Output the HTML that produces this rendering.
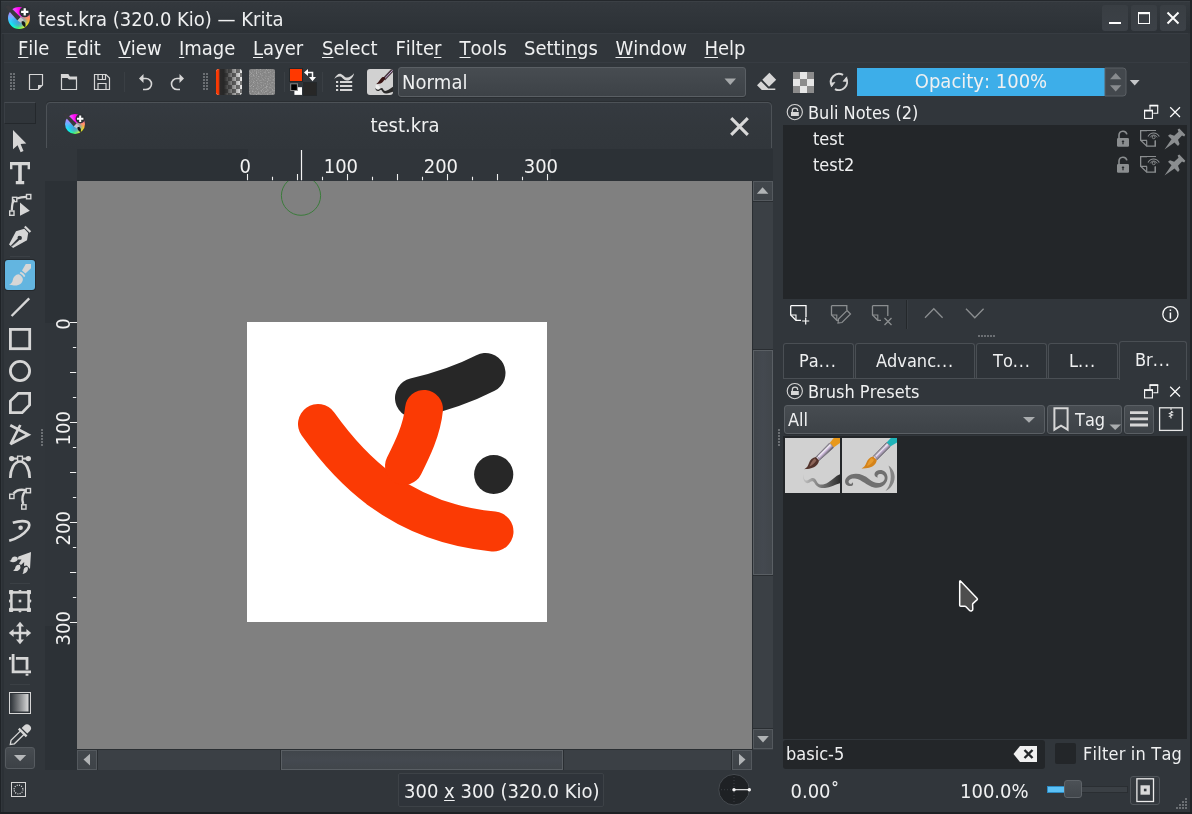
<!DOCTYPE html>
<html><head><meta charset="utf-8"><title>test.kra (320.0 Kio) — Krita</title>
<style>
*{box-sizing:border-box;margin:0;padding:0}
html,body{width:1192px;height:814px;overflow:hidden;background:#31363b}
body{position:relative;font-kerning:none;font-family:"DejaVu Sans","Liberation Sans",sans-serif;font-size:20px;font-stretch:condensed;color:#eff0f1;-webkit-font-smoothing:antialiased}
.a{position:absolute}
.t{position:absolute;white-space:nowrap;line-height:24px;height:24px}
u{text-decoration:underline;text-underline-offset:2px;text-decoration-thickness:1px}
svg{position:absolute;overflow:visible}
.btn{position:absolute;border:1px solid #5a5f64;border-radius:3px;background:linear-gradient(#474c51,#3d4247);box-shadow:0 1px 0 #2b2f33}
.wb{top:5px;width:26px;height:26px;border-radius:3px;background:linear-gradient(#393e43,#3c4147)}
.sbb{width:20px;height:20px;background:linear-gradient(#42474c,#3e4348);border:1px solid #54595e}
.dtab{top:343px;height:36px;border:1px solid #4a4f54;border-bottom:none;border-radius:3px 3px 0 0;background:#2e3338}
.d{font-size:18px}
.kic{border-radius:50%;background:radial-gradient(ellipse 42% 30% at 52% 68%,rgba(74,144,226,.95) 0%,rgba(74,150,230,.6) 60%,rgba(74,150,230,0) 100%),conic-gradient(from 0deg,#ff00f0 0deg,#ff30d0 50deg,#ff8a78 85deg,#ffa050 100deg,#ffee00 128deg,#e8ff20 150deg,#40ff70 185deg,#00ffee 222deg,#40c8ff 255deg,#8aa0ff 285deg,#d070ff 315deg,#ff30ff 340deg,#ff00f0 360deg)}
#root{position:absolute;left:0;top:0;width:1192px;height:814px;will-change:transform}
</style></head><body><div id="root">
<!-- window frame -->
<div class="a" id="win" style="left:0;top:0;width:1192px;height:814px;background:#31363b"></div>
<!-- TITLEBAR -->
<div class="a" id="titlebar" style="left:0;top:0;width:1192px;height:33px;background:linear-gradient(#34393e,#2c3136)"></div><div class="a" style="left:1px;top:1px;width:1189px;height:1px;background:#3b4045"></div>
<div class="a kic" style="left:7.5px;top:6.6px;width:22.8px;height:22.8px"></div><svg style="left:4.08px;top:3.18px" width="29.64" height="29.64" viewBox="-1.3 -1.3 2.6 2.6"><circle cx="0.52" cy="-0.52" r="0.47" fill="#2d3136"/><path d="M-1.18 -0.94 L-0.94 -1.12 L0.16 -0.06 L-0.12 0.24 Z" fill="#39393d"/><path d="M0.16 -0.06 L0.44 0.2 L0.22 0.46 L-0.12 0.24 Z" fill="#c4c4ca"/><path d="M0.26 0.3 C0.5 0.25 0.66 0.45 0.56 0.82 C0.36 0.74 0.2 0.52 0.26 0.3 Z" fill="#17171a"/><path d="M0.52 -0.84 V-0.2 M0.2 -0.52 H0.84" stroke="#fff" stroke-width="0.2" fill="none"/></svg>
<div class="t" style="left:38px;top:7px">test.kra (320.0 Kio) — Krita</div>
<div class="a wb" style="left:1102px"></div><div class="a wb" style="left:1131px"></div><div class="a wb" style="left:1160px"></div>
<svg style="left:1102px;top:5px" width="84" height="26" viewBox="0 0 84 26">
<path d="M7 18 H19" stroke="#fcfcfc" stroke-width="2" fill="none"/>
<rect x="36.5" y="7.5" width="11" height="11" stroke="#fcfcfc" stroke-width="1" fill="none"/><rect x="36" y="7" width="12" height="2.2" fill="#fcfcfc"/>
<path d="M65.500 7.500 L76.500 18.500 M76.500 7.500 L65.500 18.500" stroke="#fcfcfc" stroke-width="2" fill="none"/>
</svg>
<div class="a" style="left:2px;top:33px;width:1186px;height:1px;background:#373c42"></div>
<!-- MENUBAR -->
<div class="a" id="menubar" style="left:0;top:34px;width:1192px;height:28px"></div>
<div class="t" style="left:18px;top:36px"><u>F</u>ile</div>
<div class="t" style="left:66px;top:36px"><u>E</u>dit</div>
<div class="t" style="left:118.5px;top:36px"><u>V</u>iew</div>
<div class="t" style="left:179px;top:36px"><u>I</u>mage</div>
<div class="t" style="left:253px;top:36px"><u>L</u>ayer</div>
<div class="t" style="left:322px;top:36px"><u>S</u>elect</div>
<div class="t" style="left:395.5px;top:36px">Filte<u>r</u></div>
<div class="t" style="left:459.5px;top:36px"><u>T</u>ools</div>
<div class="t" style="left:524px;top:36px">Setti<u>n</u>gs</div>
<div class="t" style="left:615.5px;top:36px"><u>W</u>indow</div>
<div class="t" style="left:704.5px;top:36px"><u>H</u>elp</div>
<div class="a" style="left:2px;top:62px;width:1186px;height:1px;background:#373c42"></div>
<!-- TOOLBAR -->
<div class="a" id="toolbar" style="left:0;top:62px;width:1192px;height:40px"></div>
<svg id="tbicons" style="left:0;top:62px" width="1192" height="40" viewBox="0 62 1192 40">
<g fill="#6b6f73"><path id="grip" d="M10 73h2v2h-2zM13 73h2v2h-2zM10 76h2v2h-2zM13 76h2v2h-2zM10 79h2v2h-2zM13 79h2v2h-2zM10 82h2v2h-2zM13 82h2v2h-2zM10 85h2v2h-2zM13 85h2v2h-2zM10 88h2v2h-2zM13 88h2v2h-2z"/><use href="#grip" x="193"/></g>
<!-- new -->
<path d="M29.500 74.500 H42.500 V85 L38 89.500 H29.500 Z" fill="none" stroke="#d6d6d6" stroke-width="1.200"/><path d="M42.500 85 H38 V89.500 Z" fill="#d6d6d6"/>
<!-- open -->
<path d="M61.500 74.500 H68 L69.500 77 H76.500 V89.500 H61.500 Z" fill="none" stroke="#d6d6d6" stroke-width="1.200"/><path d="M61.500 74.500 H68 L69.500 77 H76.500 V79.500 H69 L67.500 78 H61.500 Z" fill="#d6d6d6"/>
<!-- save -->
<path d="M94.500 74.500 H106 L109.500 78 V89.500 H94.500 Z" fill="none" stroke="#d6d6d6" stroke-width="1.200"/><path d="M98 74.500 V79.500 H105.500 V74.500 M102.500 75 V79 M98 89.500 V83.500 H106 V89.500" fill="none" stroke="#d6d6d6" stroke-width="1.200"/>
<path d="M124.500 72 V92" stroke="#3a3f44" stroke-width="1"/>
<!-- undo -->
<path d="M141.500 78.500 H146 A5.500 5.500 0 0 1 146 89.500 H143" fill="none" stroke="#d6d6d6" stroke-width="1.600"/><path d="M139 78.500 L143.500 74 V83 Z" fill="#d6d6d6"/>
<!-- redo -->
<path d="M181.500 78.500 H177 A5.500 5.500 0 0 0 177 89.500 H180" fill="none" stroke="#d6d6d6" stroke-width="1.600"/><path d="M184 78.500 L179.500 74 V83 Z" fill="#d6d6d6"/>
<!-- gradient btn -->
<defs>
<pattern id="chk" x="216" y="69" width="8" height="8" patternUnits="userSpaceOnUse"><rect width="8" height="8" fill="#808080"/><rect width="4" height="4" fill="#fff"/><rect x="4" y="4" width="4" height="4" fill="#fff"/></pattern>
<linearGradient id="gfade" x1="0" x2="1" y1="0" y2="0"><stop offset="0" stop-color="#ff3800"/><stop offset="0.09" stop-color="#f63a06"/><stop offset="0.16" stop-color="#2c2a2a"/><stop offset="0.3" stop-color="#272727"/><stop offset="1" stop-color="#272727" stop-opacity="0.08"/></linearGradient>
<clipPath id="gclip"><rect x="216" y="69" width="26" height="26" rx="3"/></clipPath>
<filter id="noise" x="0" y="0" width="100%" height="100%"><feTurbulence type="fractalNoise" baseFrequency="0.8" numOctaves="2" seed="4" result="n"/><feColorMatrix in="n" type="matrix" values="0 0 0 0 1  0 0 0 0 1  0 0 0 0 1  0.9 0 0 0 -0.43" result="a"/><feComposite in="a" in2="SourceGraphic" operator="in"/></filter>
</defs>
<g clip-path="url(#gclip)"><rect x="216" y="69" width="26" height="26" fill="url(#chk)"/><rect x="216" y="69" width="26" height="26" fill="url(#gfade)"/></g>
<rect x="249" y="69" width="26" height="26" rx="2" fill="#858585"/><rect x="249" y="69" width="26" height="26" rx="2" fill="#fff" filter="url(#noise)"/>
<path d="M284.500 72 V92 M322.500 72 V92" stroke="#3a3f44" stroke-width="1"/>
<!-- fg/bg -->
<rect x="289.500" y="68.500" width="13" height="13" fill="#ff3800" stroke="#24282b" stroke-width="1"/>
<rect x="303.500" y="82.500" width="13" height="13" fill="#272727" stroke="#24282b" stroke-width="1"/>
<rect x="294.400" y="87.200" width="7.600" height="7.700" fill="#fff"/>
<rect x="290.700" y="83.800" width="6.700" height="6.700" fill="#000" stroke="#8c8c8c" stroke-width="1"/>
<path d="M306 72.500 H312.500 V79" fill="none" stroke="#fcfcfc" stroke-width="1.500"/><path d="M304 72.500 L308 69 V76 Z M312.500 81.200 L309 77 H316 Z" fill="#fcfcfc"/>
<!-- brush settings icon -->
<path d="M334.300 78.800 C336 75.500 338.500 73.200 341 74 C343.500 74.800 344.500 77.600 347 77.600 C349.500 77.600 352 75.500 354 73.200 C353.500 77 350.500 80.500 347 80.500 C343.500 80.500 342.500 77 340.200 76.500 C338 76.100 336 77.200 334.300 78.800 Z" fill="#d6d6d6"/>
<path d="M336 82 H338.200 M340 82 H352.200 M336 86 H338.200 M340 86 H352.200 M336 90 H338.200 M340 90 H352.200" stroke="#d6d6d6" stroke-width="2.100" fill="none"/>
<!-- brush preset btn -->
<clipPath id="pbc"><rect x="367" y="69" width="26" height="26" rx="3"/></clipPath>
<g clip-path="url(#pbc)"><rect x="367" y="69" width="26" height="26" fill="#d1d1d1"/>
<path d="M375.500 85.500 C377 84.500 379 85.500 380 87 L379 90 L375.800 89 Z" fill="#efefef"/>
<path d="M375.300 87.800 C376.500 90 378.500 90.200 380 88.800 C381.500 87.400 382.800 87.800 383.300 89.600 C384 91.600 386.500 91 388.500 89.800 C390.500 88.600 391.800 87 394 86.200 L394 91.600 C391 92 389 93.600 386 93.400 C383.500 93.200 382.500 91.800 381.800 90.400 C381.200 89.400 380.600 89.600 379.600 90.400 C377.800 91.800 375.500 90.800 375.300 87.800 Z" fill="#2b2b2b"/>
<path d="M393.4 69.1 L383.8 79.3" stroke="#4a3a42" stroke-width="3.3"/><path d="M392.8 70.1 L384.4 79" stroke="#bfa4d0" stroke-width="1"/>
<path d="M385.600 78 L383 81.800 C381.500 83.600 379 84.200 376.300 84 C378.500 82.500 379.500 80.500 381.200 78.300 C382.300 76.900 384 76.400 385.600 78 Z" fill="#3a1414"/>
</g>
</svg>
<!-- blend combobox -->
<div class="btn" style="left:398px;top:67px;width:348px;height:30px"></div>
<div class="t" style="left:402px;top:70px">Normal</div>
<svg style="left:724px;top:78px" width="13" height="8" viewBox="0 0 13 8"><path d="M0.500 0.500 H12 L6.250 7 Z" fill="#a5a8aa"/></svg>
<svg id="tbicons2" style="left:750px;top:62px" width="442" height="40" viewBox="750 62 442 40">
<!-- eraser -->
<path d="M769.400 72.800 L776.200 79.800 L769 86.800 L762.300 79.800 Z" fill="#d6d6d6"/><path d="M761 81.300 L757 85.200 L761.800 90 H775.300 V88.400 H768.200 Z" fill="#d6d6d6"/>
<!-- checker -->
<g><rect x="793" y="72" width="21" height="21" fill="#e6e6e6"/><rect x="793" y="72" width="7" height="7" fill="#8c8c8c"/><rect x="807" y="72" width="7" height="7" fill="#8c8c8c"/><rect x="800" y="79" width="7" height="7" fill="#8c8c8c"/><rect x="793" y="86" width="7" height="7" fill="#8c8c8c"/><rect x="807" y="86" width="7" height="7" fill="#8c8c8c"/></g>
<!-- reload -->
<path d="M843.050 74.990 A8.100 8.100 0 0 0 831.990 86.050 M834.950 89.010 A8.100 8.100 0 0 0 845.940 77.830" fill="none" stroke="#d6d6d6" stroke-width="2"/>
<path d="M831.300 87 L835 82.200 L831.600 83 Z M846.800 76.800 L843 81.300 L846.600 81.600 Z" fill="#d6d6d6" stroke="#d6d6d6" stroke-width="0.600" stroke-linejoin="round"/>
<!-- opacity -->
<rect x="857" y="68" width="248" height="28" fill="#3daee9"/>
<path d="M1105 68 H1123 Q1126 68 1126 71 V93 Q1126 96 1123 96 H1105 Z" fill="#43484d" stroke="#5a5f64" stroke-width="1"/>
<path d="M1110 79.200 H1121.400 L1115.700 73 Z M1110 85.200 H1121.400 L1115.700 91.400 Z" fill="#888b8e"/>
<path d="M1129.800 80 H1139.600 L1134.700 85.400 Z" fill="#c4c6c8"/>
</svg>
<div class="t" style="left:857px;top:69px;width:248px;text-align:center">Opacity: 100%</div>
<!-- TOOLBOX -->
<div class="a" style="left:4px;top:102px;width:32px;height:22px;border:1px solid #24282c;border-top-color:#464b51;border-left-color:#3a3f45;background:#30353a"></div>
<div class="a" style="left:5px;top:260px;width:30px;height:30px;border-radius:3px;background:#63b5e0;box-shadow:0 0 0 1px #24282c"></div>
<div class="a" style="left:5px;top:747px;width:30px;height:22px;border-radius:3px;border:1px solid #565b60;background:linear-gradient(#474c51,#3c4146)"></div>
<svg id="toolicons" style="left:0;top:100px" width="45" height="714" viewBox="0 100 45 714" fill="none" stroke="none">
<g stroke="#3b4045" stroke-width="1"><path d="M10 256.500H30M10 583.500H30M10 684.500H30"/></g>
<!-- pointer -->
<path d="M13 130 V149.300 L17.600 145.300 L20.600 152.300 L23.500 151 L20.600 144 L26.300 143.500 Z" fill="#d6d6d6"/>
<!-- text -->
<path d="M10 162 H30 V169.300 H27.600 V165.200 H21.800 V181 H24.200 V184.300 H15.800 V181 H18.200 V165.200 H12.400 V169.300 H10 Z" fill="#d6d6d6"/>
<!-- edit shapes -->
<path d="M11.800 210.500 C12 204 12.500 201 14.500 199.500 M17 198.500 C20 197.200 23 196.800 26 196.800" stroke="#d6d6d6" stroke-width="2.200"/>
<g stroke="#d6d6d6" stroke-width="1.400"><rect x="26.500" y="194.500" width="4.300" height="4.300"/><rect x="12.500" y="197.300" width="4.300" height="4.300"/><rect x="9.700" y="211" width="4.300" height="4.300"/></g>
<path d="M20 202.500 V215.700 L29.800 210.800 Z" fill="#d6d6d6"/>
<!-- calligraphy -->
<path d="M16 231.200 L24.300 228.800 L28.200 233 L27 240.200 L13 248 L11.800 246.800 L18.200 238.500 A1.900 1.900 0 1 1 19.600 239.800 L11.800 246.800 L9 244.400 Z" fill="#d6d6d6" fill-rule="evenodd"/>
<path d="M24.800 226.500 L30.400 232" stroke="#d6d6d6" stroke-width="2.200"/>
<circle cx="19.300" cy="237.500" r="1.700" fill="#31363b"/><path d="M18.300 238.600 L11.400 246" stroke="#31363b" stroke-width="1.100"/>
<!-- brush (selected) -->
<path d="M25.800 264 H31 V268.200 L25.400 273.600 L22 270.600 Z" fill="#d6d6d6"/>
<path d="M20.700 271.800 C22.700 272.500 24.300 274 25.300 276 L24 277.200 C23 275.400 21.500 274 19.600 273.200 Z" fill="#d6d6d6"/>
<path d="M18.600 274.300 C21 275.200 22.500 277 22.900 279 C23 283 19 286 14 285.500 C12 285.400 10.500 285 9 284.600 C11 284 12.300 282.600 12.800 280 C13.300 277.200 15.500 274.600 18.600 274.300 Z" fill="#d6d6d6"/>
<!-- line -->
<path d="M11.600 316 L29.200 298.400" stroke="#d6d6d6" stroke-width="2.400"/>
<!-- rect -->
<rect x="10.400" y="329.400" width="19.300" height="19.300" stroke="#d6d6d6" stroke-width="2.800"/>
<!-- ellipse -->
<circle cx="20" cy="371" r="9.600" stroke="#d6d6d6" stroke-width="2.800"/>
<!-- polygon -->
<path d="M18.200 393.400 H29.600 V405 L22.200 412.700 H10.400 V401.100 Z" stroke="#d6d6d6" stroke-width="2.800"/>
<!-- polyline -->
<path d="M10.300 425.300 L28.400 434.700 L10.600 444 L20.300 425" stroke="#d6d6d6" stroke-width="2.700" stroke-linejoin="miter" stroke-miterlimit="3"/>
<!-- bezier -->
<path d="M10.300 478 C10.300 470 14 461.500 20 461.500 C26 461.500 29.700 470 29.700 478" stroke="#d6d6d6" stroke-width="2.700"/>
<path d="M11.600 458.600 H28.400" stroke="#d6d6d6" stroke-width="2"/><circle cx="11.700" cy="458.600" r="2.700" fill="#d6d6d6"/><circle cx="28.300" cy="458.600" r="2.700" fill="#d6d6d6"/>
<rect x="17.600" y="456.200" width="4.800" height="4.800" fill="#31363b" stroke="#d6d6d6" stroke-width="1.400"/>
<!-- freehand path -->
<path d="M13.500 493.500 C16 490.500 21 489 26 490.200 C22.500 494 21.500 499 23.200 504" stroke="#d6d6d6" stroke-width="2.400"/>
<g stroke="#d6d6d6" stroke-width="1.400" fill="#31363b"><rect x="9.700" y="494.200" width="4.300" height="4.300"/><rect x="26.200" y="488.500" width="4.300" height="4.300"/><rect x="21.700" y="504.800" width="4.300" height="4.300"/></g>
<!-- dyna -->
<path d="M12.800 522.800 C18 521.200 24 520.600 27.500 522 C30 523.200 29.800 526.500 27.500 529.500 C24 534 17 538.500 9.200 540.800" stroke="#d6d6d6" stroke-width="2.700"/><circle cx="20.600" cy="527.700" r="2.300" fill="#d6d6d6"/>
<!-- multibrush -->
<path d="M31 552 L30 569 L26.800 565.500 L24 566 L24.200 562 L21 565 L19 563.500 L21.500 559.500 L17.500 559.500 L18.500 556.500 Z" fill="#d6d6d6"/>
<path d="M17.500 557.500 C15 555.500 12 556.500 11.500 559 C11 560.500 10 560.800 9.200 560.800 C11.500 563 16.500 562.500 17.800 559.500 Z" fill="#d6d6d6"/>
<path d="M20 565 C17.500 564 15.500 565.500 15.200 568 C15 569.500 14 570 13 570.200 C15.500 572 19.500 571 20.500 568 Z" fill="#d6d6d6"/>
<path d="M27.500 567 C25 566.500 23.500 568.500 23.500 570.500 C23.500 572 23 573 22.500 574 C26 573.500 28 571 27.900 568.500 Z" fill="#d6d6d6"/>
<!-- transform -->
<rect x="11.400" y="592.400" width="17.200" height="17.200" stroke="#d6d6d6" stroke-width="2.500"/>
<g fill="#d6d6d6"><rect x="9" y="590" width="4.200" height="4.200" rx="0.800"/><rect x="26.800" y="590" width="4.200" height="4.200" rx="0.800"/><rect x="9" y="607.800" width="4.200" height="4.200" rx="0.800"/><rect x="26.800" y="607.800" width="4.200" height="4.200" rx="0.800"/><rect x="18.600" y="590" width="2.800" height="1.600" rx="0.600"/><rect x="18.600" y="610.600" width="2.800" height="1.600" rx="0.600"/><rect x="9" y="599.600" width="1.600" height="2.800" rx="0.600"/><rect x="29.600" y="599.600" width="1.600" height="2.800" rx="0.600"/><rect x="18.700" y="599.700" width="2.600" height="2.600"/></g>
<!-- move -->
<path d="M20 624 V642 M11 633 H29" stroke="#d6d6d6" stroke-width="2.400"/>
<path d="M20 621.800 L24 626.600 H16 Z M20 644.200 L24 639.400 H16 Z M8.800 633 L13.600 629 V637 Z M31.200 633 L26.400 629 V637 Z" fill="#d6d6d6"/>
<!-- crop -->
<path d="M13.100 654 V671.800 H31 M9 658.300 H11.200 M15.900 658.300 H27 V669.800 M27 673.800 V675.800" stroke="#d6d6d6" stroke-width="2.800"/>
<!-- gradient -->
<defs><linearGradient id="tg" x1="0" x2="1"><stop offset="0" stop-color="#33383d"/><stop offset="1" stop-color="#d8d8d8"/></linearGradient></defs>
<rect x="9.500" y="692.500" width="21" height="21" stroke="#d6d6d6" stroke-width="1"/><rect x="11" y="694" width="17.500" height="17.500" fill="url(#tg)"/>
<!-- picker -->
<path d="M24.200 725.600 A3.700 3.700 0 0 1 29.900 730.900 L27.300 733.500 L21.700 728 Z" fill="#d6d6d6"/>
<path d="M18.800 728.600 L26.600 736.400" stroke="#d6d6d6" stroke-width="2.400"/>
<path d="M20.800 730.600 L11 740.400 L10.300 744.500 L14.400 743.800 L24.400 734" stroke="#d6d6d6" stroke-width="1.300"/>
<path d="M14 755 H26.200 L20.100 761.300 Z" fill="#b6b8ba"/>
<!-- status selection icon -->
<rect x="11.500" y="782.500" width="14" height="14" stroke="#d6d6d6" stroke-width="1"/><circle cx="18.500" cy="789.500" r="4.400" stroke="#e6e6e6" stroke-width="1.200" stroke-dasharray="1 1.300"/>
</svg>
<!-- DOCUMENT -->
<div class="a" id="tab" style="left:46px;top:102px;width:726px;height:50px;box-shadow:0 -1px 0 #2a2e32;border:1px solid #4d5257;border-radius:4px 4px 0 0;background:linear-gradient(#353a40,#32373c 60%,#31363b)"></div>
<div class="a" style="left:45px;top:148px;width:729px;height:34px;background:#31363b"></div>
<div class="a kic" style="left:65px;top:113.9px;width:20px;height:20px"></div><svg style="left:62px;top:110.9px" width="26" height="26" viewBox="-1.3 -1.3 2.6 2.6"><circle cx="0.52" cy="-0.52" r="0.47" fill="#2d3136"/><path d="M-1.18 -0.94 L-0.94 -1.12 L0.16 -0.06 L-0.12 0.24 Z" fill="#39393d"/><path d="M0.16 -0.06 L0.44 0.2 L0.22 0.46 L-0.12 0.24 Z" fill="#c4c4ca"/><path d="M0.26 0.3 C0.5 0.25 0.66 0.45 0.56 0.82 C0.36 0.74 0.2 0.52 0.26 0.3 Z" fill="#17171a"/><path d="M0.52 -0.84 V-0.2 M0.2 -0.52 H0.84" stroke="#fff" stroke-width="0.2" fill="none"/></svg>
<div class="t" style="left:46px;top:113px;width:718px;text-align:center">test.kra</div>
<svg style="left:730px;top:117px" width="19" height="19" viewBox="0 0 19 19"><path d="M1.200 1.200 L17.800 17.800 M17.800 1.200 L1.200 17.800" stroke="#d8d8d8" stroke-width="3.100" fill="none"/></svg>
<!-- rulers -->
<div class="a" id="hruler" style="left:77px;top:149px;width:696px;height:32px;background:#2c3136"></div>
<div class="a" id="vruler" style="left:45px;top:181px;width:32px;height:589px;background:#2c3136"></div>
<div class="a" style="left:248px;top:149px;width:303px;height:32px;background:#30353a"></div>
<div class="a" style="left:45px;top:323px;width:32px;height:303px;background:#30353a"></div>
<svg id="rul" style="left:45px;top:149px;font-family:'DejaVu Sans','Liberation Sans',sans-serif;font-size:20px;font-stretch:condensed" width="728" height="621" viewBox="45 149 728 621" fill="#f2f2f2">
<path d="M247.5 174.1 V180.300M272.5 176.8 V180.300M297.5 174.1 V180.300M322.5 176.8 V180.300M347.5 174.1 V180.300M372.5 176.8 V180.300M397.5 174.1 V180.300M422.5 176.8 V180.300M447.5 174.1 V180.300M472.5 176.8 V180.300M497.5 174.1 V180.300M522.5 176.8 V180.300M547.5 174.1 V180.300" stroke="#f0f0f0" stroke-width="1.100" fill="none"/>
<path d="M70 322.5 H77M72.9 347.5 H76.200M70 372.5 H76.200M72.9 397.5 H76.200M70 422.5 H77M72.9 447.5 H76.200M70 472.5 H76.200M72.9 497.5 H76.200M70 522.5 H77M72.9 547.5 H76.200M70 572.5 H76.200M72.9 597.5 H76.200M70 622.5 H77" stroke="#f0f0f0" stroke-width="1.100" fill="none"/>
<path d="M301.500 150 V180.300" stroke="#f4f4f4" stroke-width="1.200" fill="none"/>
<text x="239.600" y="172.600">0</text><text x="323.700" y="172.600">100</text><text x="423.700" y="172.600">200</text><text x="523.700" y="172.600">300</text>
<text transform="translate(70.200 329.800) rotate(-90)">0</text><text transform="translate(70.200 445.400) rotate(-90)">100</text><text transform="translate(70.200 545.400) rotate(-90)">200</text><text transform="translate(70.200 645.400) rotate(-90)">300</text>
</svg>
<!-- canvas -->
<div class="a" id="canvas" style="left:77px;top:181px;width:675px;height:568px;background:#808080"></div>
<div class="a" id="image" style="left:247px;top:322px;width:300px;height:300px;background:#fff"></div>
<svg id="paint" style="left:247px;top:322px" width="300" height="300" viewBox="247 322 300 300">
<path d="M415 398 C440 392 466 383 485.500 373" fill="none" stroke="#272727" stroke-width="40" stroke-linecap="round"/>
<circle cx="493.700" cy="474.500" r="19.600" fill="#272727"/>
<path d="M318 424 C348 466 398 522.500 493.500 531.500" fill="none" stroke="#fb3a04" stroke-width="40" stroke-linecap="round"/>
<path d="M424 409 C422 430 412 450 404 466" fill="none" stroke="#fb3a04" stroke-width="38" stroke-linecap="round"/>
</svg>
<svg style="left:280px;top:181px;overflow:hidden" width="42" height="40" viewBox="280 181 42 40"><circle cx="301" cy="195.700" r="19.600" fill="none" stroke="#3b7c3b" stroke-width="1"/></svg>
<!-- scrollbars -->
<div class="a" style="left:752px;top:181px;width:21px;height:569px;background:#3b4045;border-left:1px solid #2a2e32"></div>
<div class="a" style="left:77px;top:749px;width:675px;height:21px;background:#3b4045;border-top:1px solid #2a2e32"></div>
<div class="a sbb" style="left:753px;top:181px"></div>
<div class="a sbb" style="left:753px;top:729px"></div>
<div class="a sbb" style="left:77px;top:750px"></div>
<div class="a sbb" style="left:732px;top:750px"></div>
<div class="a" style="left:753px;top:349px;width:20px;height:227px;background:#2a2e32"></div>
<div class="a" style="left:280px;top:750px;width:284px;height:20px;background:#2a2e32"></div>
<div class="a" style="left:97px;top:750px;width:1px;height:20px;background:#2a2e32"></div><div class="a" style="left:731px;top:750px;width:1px;height:20px;background:#2a2e32"></div>
<div class="a" style="left:753px;top:201px;width:20px;height:1px;background:#2a2e32"></div><div class="a" style="left:753px;top:728px;width:20px;height:1px;background:#2a2e32"></div>
<div class="a" style="left:753px;top:350px;width:20px;height:225px;background:linear-gradient(90deg,#41464b,#444950 50%,#41464b);border:1px solid #5a5f64"></div>
<div class="a" style="left:281px;top:750px;width:282px;height:20px;background:linear-gradient(#41464b,#444950 50%,#41464b);border:1px solid #5a5f64"></div>
<svg style="left:77px;top:181px" width="696" height="589" viewBox="77 181 696 589"><g fill="#b0b3b5"><path d="M756.800 193.800 H768.400 L762.600 187.300 Z"/><path d="M757.200 736 H768.800 L763 742.500 Z"/><path d="M90 753.800 V765.400 L83.500 759.600 Z"/><path d="M739 753.800 V765.400 L745.500 759.600 Z"/></g></svg>
<!-- DOCKS -->
<div class="a" style="left:783px;top:125px;width:404px;height:174px;background:#232629"></div>
<div class="t d" style="left:808px;top:101px">Buli Notes (2)</div>
<div class="t d" style="left:813px;top:127px">test</div>
<div class="t d" style="left:813px;top:153px">test2</div>
<svg id="dock1" style="left:783px;top:100px" width="405" height="240" viewBox="783 100 405 240" fill="none">
<g id="lockc"><circle cx="794.800" cy="112.100" r="7.600" stroke="#d6d6d6" stroke-width="1.100"/><rect x="791" y="112" width="7.800" height="4" fill="#d6d6d6"/><path d="M792.3 112 V110.9 A2.7 2.7 0 0 1 797.7 110.9" stroke="#d6d6d6" stroke-width="1.2"/></g>
<g id="floatx" stroke="#fcfcfc"><path d="M1150 109.800 V105.700 H1157.700 V113.300 H1153.300" stroke-width="1.100"/><path d="M1149.500 105.500 H1158.200" stroke-width="1.600"/><rect x="1144.600" y="110.700" width="7.800" height="7.700" stroke-width="1.100"/><path d="M1144 110.500 H1153" stroke-width="1.600"/><path d="M1170.200 107.300 L1180 117 M1180 107.300 L1170.200 117" stroke-width="1.200"/></g>
<g id="rowic"><g fill="#8b8e90"><rect x="1117" y="138" width="12" height="8.800" rx="1.200"/><path d="M1156 130 V146.700 H1146.500 L1140 140.500 V130 Z M1154.700 131.300 H1141.300 V140 L1147 145.400 H1154.700 Z" fill-rule="evenodd"/><path d="M1140.500 140.300 H1146.700 V146.200" fill="none" stroke="#8b8e90" stroke-width="1.200"/><path d="M1164.500 149.600 L1171.500 139.300 L1168 135.800 L1170 134.300 L1174.200 135.800 L1178.500 131.800 L1177.600 129.500 L1179.300 128.600 L1185.300 134.800 L1184.200 136.400 L1182 135.400 L1178 139.800 L1179.600 144 L1178 146 L1174.500 142.400 Z"/></g>
<path d="M1119 138 V135 A4 4 0 0 1 1126.900 134.400" stroke="#8b8e90" stroke-width="1.600"/><path d="M1123 140 L1124.500 142 H1123.600 V144.300 H1122.400 V142 H1121.500 Z" fill="#232629"/>
<rect x="1147" y="131" width="12" height="9.500" fill="#232629"/><path d="M1148 136.500 C1150.500 131.800 1156.500 131.800 1159.300 136.500" stroke="#8b8e90" stroke-width="1.100"/><path d="M1150.200 137.300 C1152 134.300 1155.400 134.300 1157.200 137.300" stroke="#8b8e90" stroke-width="1"/><circle cx="1153.700" cy="137.200" r="1.500" stroke="#8b8e90" stroke-width="0.900"/><path d="M1155.300 140.500 V146 " stroke="#8b8e90" stroke-width="1.300"/></g>
<use href="#rowic" y="26"/>
<!-- bottom toolbar -->
<g stroke="#fcfcfc" stroke-width="1.300"><path d="M790.700 305.700 H806 V317 M801 320.300 H796 L790.700 315 V305.700"/><path d="M790.700 315 H796 V320.300" stroke-width="1.100"/><path d="M805.700 317.500 V324.500 M802.200 321 H809.200" stroke-width="1.200"/></g>
<g stroke="#8b8e90" stroke-width="1.300"><path d="M831.500 305.700 H846.800 V310 M839 320.300 H836.800 L831.500 315 V305.700"/><path d="M831.500 315 H836.800 V320.300" stroke-width="1.100"/><path d="M847 310.500 L850.500 314 L842 322.500 L838 323 L838.500 319 Z" stroke-width="1.200"/>
<path d="M872.500 305.700 H887.800 V316 M881 320.300 H877.800 L872.500 315 V305.700"/><path d="M872.500 315 H877.800 V320.300" stroke-width="1.100"/><path d="M884.500 318 L891.500 325 M891.500 318 L884.500 325" stroke-width="1.300"/>
<path d="M925 317.800 L933.800 308.800 L942.600 317.800 M966 308.800 L974.800 317.800 L983.600 308.800" stroke-width="1.300"/></g>
<path d="M906.500 300 V329" stroke="#24282b" stroke-width="1"/><path d="M907.500 300 V329" stroke="#393e43" stroke-width="1"/>
<circle cx="1170.400" cy="314.200" r="7.600" stroke="#fcfcfc" stroke-width="1.300"/><path d="M1170.400 312.500 V318.800 M1170.400 309.500 V311" stroke="#fcfcfc" stroke-width="1.500"/>
<path d="M978 335h2v2h-2zM981 335h2v2h-2zM984 335h2v2h-2zM987 335h2v2h-2zM990 335h2v2h-2zM993 335h2v2h-2z" fill="#6b6f73"/>
</svg>
<!-- tabs -->
<div class="a dtab" style="left:783px;width:71px"></div>
<div class="a dtab" style="left:855px;width:120px"></div>
<div class="a dtab" style="left:976px;width:71px"></div>
<div class="a dtab" style="left:1048px;width:70px"></div>
<div class="a dtab" style="left:1119px;width:68px;top:341px;height:39px;background:#31363b;border-bottom:none"></div>
<div class="a" style="left:783px;top:378px;width:337px;height:1px;background:#4a4f54"></div>
<div class="t d" style="left:799px;top:349px">Pa<span style="letter-spacing:0.85px">...</span></div>
<div class="t d" style="left:876px;top:349px">Advanc<span style="letter-spacing:0.85px">...</span></div>
<div class="t d" style="left:993px;top:349px">To<span style="letter-spacing:0.85px">...</span></div>
<div class="t d" style="left:1069px;top:349px">L<span style="letter-spacing:0.85px">...</span></div>
<div class="t d" style="left:1135px;top:348px">Br<span style="letter-spacing:0.85px">...</span></div>
<!-- brush presets -->
<div class="t d" style="left:808px;top:380px">Brush Presets</div>
<svg style="left:783px;top:380px" width="405" height="24" viewBox="783 380 405 24" fill="none"><use href="#lockc" y="279"/><use href="#floatx" y="279.500"/></svg>
<div class="btn" style="left:784px;top:405px;width:261px;height:29px"></div>
<div class="t d" style="left:788px;top:408px">All</div>
<div class="btn" style="left:1047px;top:405px;width:75px;height:29px"></div>
<div class="t d" style="left:1075px;top:408px">Tag</div>
<div class="btn" style="left:1124px;top:405px;width:30px;height:29px"></div>
<svg style="left:1020px;top:405px" width="168" height="30" viewBox="1020 405 168 30" fill="none">
<path d="M1023 417 H1035 L1029 422.800 Z" fill="#a9acae"/>
<path d="M1054.400 408.200 H1067.600 V429.600 L1061 425.600 L1054.400 429.600 Z" stroke="#d6d6d6" stroke-width="2"/>
<path d="M1109.500 424.500 H1121 L1115.200 430 Z" fill="#a9acae"/>
<path d="M1130 412.700 H1148 M1130 418.800 H1148 M1130 425 H1148" stroke="#d6d6d6" stroke-width="2.800"/>
<rect x="1159.600" y="407.800" width="22.800" height="22.600" stroke="#e6e6e6" stroke-width="1.300"/><path d="M1171 408 V410 M1171 411.300 l1.500 0.800 l-3 1.400 l3 1.400 l-3 1.400 l1.500 0.800 V418.600" stroke="#e6e6e6" stroke-width="1.100"/>
</svg>
<div class="a" style="left:783px;top:436px;width:404px;height:303px;background:#232629"></div>
<svg style="left:778px;top:429px" width="2" height="17" viewBox="0 0 2 17"><path d="M0 0h2v2h-2zM0 3h2v2h-2zM0 6h2v2h-2zM0 9h2v2h-2zM0 12h2v2h-2zM0 15h2v2h-2z" fill="#6b6f73"/></svg>
<svg style="left:41px;top:429px" width="2" height="17" viewBox="0 0 2 17"><path d="M0 0h2v2h-2zM0 3h2v2h-2zM0 6h2v2h-2zM0 9h2v2h-2zM0 12h2v2h-2zM0 15h2v2h-2z" fill="#6b6f73"/></svg>
<svg id="thumbs" style="left:785px;top:438px" width="112" height="55" viewBox="0 0 112 55" fill="none">
<defs>
<linearGradient id="fer" gradientUnits="userSpaceOnUse" x1="37.4" y1="11.9" x2="41.6" y2="16.1"><stop offset="0" stop-color="#5e5a64"/><stop offset="0.3" stop-color="#f2eef6"/><stop offset="0.55" stop-color="#cdb8dc"/><stop offset="0.82" stop-color="#8a8492"/><stop offset="1" stop-color="#55515b"/></linearGradient><linearGradient id="fer2" gradientUnits="userSpaceOnUse" x1="94.6" y1="11.3" x2="98.8" y2="15.5"><stop offset="0" stop-color="#5e5a64"/><stop offset="0.3" stop-color="#f2eef6"/><stop offset="0.55" stop-color="#cdb8dc"/><stop offset="0.82" stop-color="#8a8492"/><stop offset="1" stop-color="#55515b"/></linearGradient>
<linearGradient id="st1" x1="0" x2="1" y1="0" y2="0"><stop offset="0" stop-color="#c4c4c4"/><stop offset="0.4" stop-color="#828282"/><stop offset="1" stop-color="#2a2a2a"/></linearGradient>
<clipPath id="c1"><rect width="55" height="55"/></clipPath><clipPath id="c2"><rect x="57" width="55" height="55"/></clipPath>
</defs>
<rect width="55" height="55" fill="#d1d1d1"/><rect x="57" width="55" height="55" fill="#d1d1d1"/>
<g id="th1" clip-path="url(#c1)">
<path d="M18 36 C18.500 42 21 44 24 41.500 C27 39 30 39.500 31.500 43 C33 47.500 38 47.500 43 44.500 C48 41.500 51 37.500 56 36 L56 45 C50 46.500 46 49.500 40 50 C34 50.500 31 48 29.500 45 C28 42.500 26.500 43 24.500 44.500 C21 47 17.500 43 18 36 Z" fill="url(#st1)"/>
<path d="M49.100 -0.500 H56 V4.400 L48.600 9.600 L44.700 4.900 Z" fill="#e8981a"/>
<path d="M44.700 4.900 L48.600 9.600 L34 22.600 L30.900 19 Z" fill="url(#fer)"/><path d="M44.700 4.900 L30.900 19 M48.600 9.600 L34 22.600" stroke="#77717f" stroke-width="0.900"/><path d="M45.300 5.600 L48 8.900 M32 18 L34.800 21.600" stroke="#8a8490" stroke-width="0.800"/>
<path d="M30.900 19 L34 22.600 C33.500 26.500 30 29.500 26 30.200 C23.500 30.800 21.500 31 19.300 31.200 C22.500 29.500 23 27.500 24 25 C25 22 27.500 19.500 30.900 19 Z" fill="#53342c"/>
<path d="M29.500 20.500 C27 22.500 25.500 25.500 24.500 28.500 C27 27.500 30 25 31.500 22.300 Z" fill="#8d6558"/>
</g>
<g clip-path="url(#c2)">
<path d="M62.500 47.500 C58 45 60 38.500 66 36.500 C72 34.500 79 36.500 84 41 C89 45.500 95 46.500 98.500 43 C101 40.500 99.500 36.500 96 36 C93 35.700 91.500 38 93 39.500 C89.500 39.500 88 35.500 91.500 33 C95.500 30.500 102 32.500 102.500 39 C103 46 96 51 89 49.500 C82 48 77 41.500 70 40.500 C65 40 62 43 64.500 45.500 C66 46.500 67.500 45.500 67 44.200 C69.500 45.500 68 49.500 62.500 47.500 Z" fill="#707070"/>
<path d="M103.500 27.500 C109.500 32 112 40 107 47.500 C105.500 50 103 52 100.500 53 C106 47 107.500 38 103.500 27.500 Z" fill="#858585"/>
<path d="M106.300 -0.500 H113 V3.900 L105.300 8.600 L101.600 4.400 Z" fill="#1fb3b8"/>
<path d="M101.600 4.400 L105.300 8.600 L91.700 22.100 L88.100 18.400 Z" fill="url(#fer2)"/><path d="M101.600 4.400 L88.100 18.400 M105.300 8.600 L91.700 22.100" stroke="#77717f" stroke-width="0.900"/><path d="M102.200 5.100 L104.700 8 M89.200 17.400 L92.500 21" stroke="#8a8490" stroke-width="0.800"/><path d="M99.500 8 L89.500 18.500 M101 9.500 L91 20" stroke="#9a94a6" stroke-width="0.500"/>
<path d="M88.100 18.400 L91.700 22.100 C91.500 26 88 29 84 29.800 C81.500 30.400 79 30.600 76.500 30.500 C79.500 29 80.500 27 81.500 24.500 C82.500 21.500 84.800 19 88.100 18.400 Z" fill="#d4831a"/>
<path d="M86.500 20 C84 22 83 25 82 28 C85 27 88 24.500 89 21.800 Z" fill="#e89a2c"/>
</g>
</svg>
<svg id="cursor" style="left:955px;top:577px" width="28" height="38" viewBox="955 577 28 38"><path d="M959.700 581.600 V605.200 Q959.700 606.200 960.700 606.200 H964.900 Q965.500 606.200 966 606.700 L969.600 610.400 Q970.500 611.300 971.700 610.800 Q972.900 610.300 972.800 609 L972.600 604.600 Q972.600 603.900 973.100 603.400 L977.200 599.600 Q977.700 599.100 977.200 598.600 L960.700 581.300 Q959.700 580.300 959.700 581.600 Z" fill="#4d4d4d" stroke="#fff" stroke-width="1.500" stroke-linejoin="round"/></svg>

<!-- search -->
<div class="a" style="left:783px;top:740px;width:262px;height:29px;background:#232629;border-radius:3px"></div>
<div class="t d" style="left:786px;top:742px">basic-5</div>
<div class="a" style="left:1055px;top:743px;width:21px;height:21px;background:#232629;border-radius:2px"></div>
<div class="t d" style="left:1083px;top:742px;letter-spacing:0.2px">Filter in Tag</div>
<svg style="left:1012px;top:744px" width="26" height="20" viewBox="1012 744 26 20"><path d="M1013.500 754 L1020 746 H1037 V762 H1020 Z" fill="#f0f0f0"/><path d="M1024.500 750 L1032.500 758 M1032.500 750 L1024.500 758" stroke="#232629" stroke-width="2.400"/></svg>
<!-- STATUSBAR -->
<div class="a" style="left:398px;top:773px;width:206px;height:34px;border:1px solid #3d4247;border-radius:2px;background:#2f343a"></div>
<div class="t" style="left:404px;top:779px">300 <u>x</u> 300 (320.0 Kio)</div>
<svg style="left:715px;top:770px" width="40" height="40" viewBox="715 770 40 40" fill="none"><circle cx="734" cy="789.700" r="15.300" fill="#1e2124" stroke="#454a4f" stroke-width="1"/><path d="M721 789.700 H733 M734 777 V802" stroke="#3a3f44" stroke-width="1" stroke-dasharray="1 2"/><path d="M734 789.700 H749.300" stroke="#f4f4f4" stroke-width="1.100"/><circle cx="734" cy="789.700" r="1.700" fill="#f4f4f4"/><circle cx="749.300" cy="789.700" r="1.700" fill="#f4f4f4"/></svg>
<div class="t" style="left:790.500px;top:779px">0.00˚</div>
<div class="t" style="left:960px;top:779px">100.0%</div>
<div class="a" style="left:1047px;top:786px;width:80.500px;height:7px;background:#3b4045;border:1px solid #2a2e32"></div>
<div class="a" style="left:1047px;top:786px;width:18px;height:7px;background:#5cc1f6;border:1px solid #2e8cc4"></div>
<div class="a" style="left:1064px;top:780px;width:18px;height:18px;border-radius:3px;background:linear-gradient(#4c5156,#41464b);border:1px solid #5e6368"></div>
<div class="a" style="left:1130px;top:775.500px;width:30px;height:29.500px;border-radius:3px;border:1px solid #50555a;background:linear-gradient(#363b40,#32373c)"></div>
<svg style="left:1130px;top:775px" width="62" height="39" viewBox="1130 775 62 39" fill="none"><rect x="1136.900" y="778.800" width="16.600" height="22.700" stroke="#ececec" stroke-width="1.300"/><rect x="1142.200" y="787" width="6" height="6" stroke="#d9d9d9" stroke-width="3.400"/>
<path d="M1185 798h2v2h-2zM1182 801h2v2h-2zM1185 801h2v2h-2zM1179 804h2v2h-2zM1182 804h2v2h-2zM1185 804h2v2h-2zM1176 807h2v2h-2zM1179 807h2v2h-2zM1182 807h2v2h-2zM1185 807h2v2h-2z" fill="#6b6f73"/></svg>
<!-- window borders -->
<div class="a" style="left:0;top:0;width:1192px;height:1px;background:#24282c"></div>
<div class="a" style="left:0;top:0;width:1.200px;height:814px;background:#1f2327"></div>
<div class="a" style="left:1.500px;top:34px;width:2px;height:778px;background:#2c3136"></div>
<div class="a" style="left:1189.500px;top:0;width:2.500px;height:814px;background:#212529"></div>
<div class="a" style="left:0;top:811.500px;width:1192px;height:2.500px;background:#1d2024"></div>
</div></body></html>
